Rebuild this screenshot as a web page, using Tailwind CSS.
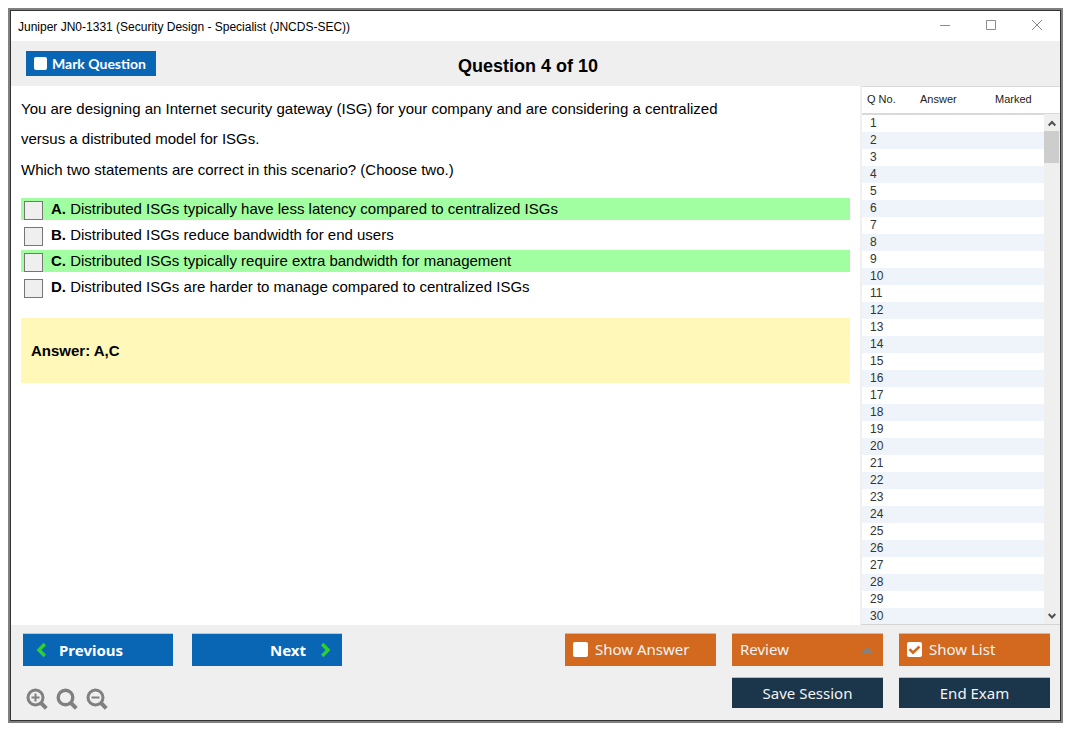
<!DOCTYPE html>
<html lang="en">
<head>
    <meta charset="UTF-8">
    <meta name="viewport" content="width=device-width, initial-scale=1.0">
    <title>Juniper JN0-1331 (Security Design - Specialist (JNCDS-SEC))</title>
    <script src="https://cdn.jsdelivr.net/npm/@tailwindcss/browser@4"></script>
</head>
<body class="h-screen bg-white pt-2 pl-2 pr-3 pb-3 font-['Liberation_Sans',Arial,sans-serif] text-black">
    <div class="h-full border-2 border-[#808080]">
        <div class="h-full flex flex-col border border-[#333333] bg-[#efefef]">

            <!-- Title bar -->
            <header class="flex items-center justify-between h-[30px] shrink-0 bg-white pl-[7px] pr-[17px]">
                <h1 class="pt-0.5 text-xs">Juniper JN0-1331 (Security Design - Specialist (JNCDS-SEC))</h1>
                <div class="flex items-center gap-[34px] pb-0.5 text-[#8c8c8c]">
                    <button type="button" aria-label="Minimize">
                        <svg class="block w-3 h-3" viewBox="0 0 12 12" fill="none" stroke="currentColor"><path d="M1 6.500h10"/></svg>
                    </button>
                    <button type="button" aria-label="Maximize">
                        <svg class="block w-3 h-3" viewBox="0 0 12 12" fill="none" stroke="currentColor"><path d="M1.500 1.500h9v9h-9z"/></svg>
                    </button>
                    <button type="button" aria-label="Close">
                        <svg class="block w-3 h-3" viewBox="0 0 12 12" fill="none" stroke="currentColor"><path d="M1 1l10 10M11 1L1 11"/></svg>
                    </button>
                </div>
            </header>

            <!-- Toolbar -->
            <div class="grid grid-cols-[1fr_auto_1fr] h-[45px] shrink-0 pl-[15px] pr-[30px] pt-2.5">
                <label class="flex items-center gap-[5px] w-[130px] h-[25px] pl-2 bg-[#0866b5] text-white text-sm font-bold font-['Lato',sans-serif]">
                    <input type="checkbox" class="appearance-none w-[13px] h-[13px] rounded-xs bg-white">
                    Mark Question
                </label>
                <h2 class="pt-px text-lg font-bold">Question 4 of 10</h2>
            </div>

            <main class="flex flex-1 min-h-0">
                <!-- Question -->
                <section class="flex-1 min-w-0 bg-white px-2.5 pt-2 text-[15px]">
                    <p class="leading-[30px] max-w-[720px]">You are designing an Internet security gateway (ISG) for your company and are considering a centralized versus a distributed model for ISGs.</p>
                    <p class="leading-[30px] mt-px">Which two statements are correct in this scenario? (Choose two.)</p>

                    <div class="mt-[13px] flex flex-col gap-1 leading-[22px]">
                        <label class="flex gap-2 h-[22px] pl-[3px] bg-[#a1ffa1]">
                            <input type="checkbox" class="appearance-none w-[19px] h-[19px] mt-[3px] border border-[#767676] bg-[#efefef]">
                            <span><b>A.</b> Distributed ISGs typically have less latency compared to centralized ISGs</span>
                        </label>
                        <label class="flex gap-2 h-[22px] pl-[3px]">
                            <input type="checkbox" class="appearance-none w-[19px] h-[19px] mt-[3px] border border-[#767676] bg-[#efefef]">
                            <span><b>B.</b> Distributed ISGs reduce bandwidth for end users</span>
                        </label>
                        <label class="flex gap-2 h-[22px] pl-[3px] bg-[#a1ffa1]">
                            <input type="checkbox" class="appearance-none w-[19px] h-[19px] mt-[3px] border border-[#767676] bg-[#efefef]">
                            <span><b>C.</b> Distributed ISGs typically require extra bandwidth for management</span>
                        </label>
                        <label class="flex gap-2 h-[22px] pl-[3px]">
                            <input type="checkbox" class="appearance-none w-[19px] h-[19px] mt-[3px] border border-[#767676] bg-[#efefef]">
                            <span><b>D.</b> Distributed ISGs are harder to manage compared to centralized ISGs</span>
                        </label>
                    </div>

                    <div class="mt-5 h-[65px] flex items-center pl-2.5 pt-0.5 bg-[#fff8b9] font-bold">Answer: A,C</div>
                </section>

                <!-- Question list -->
                <aside class="flex flex-col w-[200px] shrink-0 border-l-2 border-b border-l-[#f0f0f0] border-b-[#d5d5d5] bg-white">
                    <div class="flex-1 min-h-0 flex relative">
                        <div class="flex-1 overflow-hidden">
                            <table class="w-full table-fixed border-collapse text-xs text-[#333]">
                                <thead>
                                    <tr class="h-[27px] border-t border-b-2 border-[#d9d9d9] text-[11px] text-[#222]">
                                        <th class="w-[58px] pl-[5px] text-left font-normal">Q No.</th>
                                        <th class="w-[75px] text-left font-normal">Answer</th>
                                        <th class="text-left font-normal">Marked</th>
                                    </tr>
                                </thead>
                                <tbody id="questionRows"></tbody>
                            </table>
                        </div>
                        <!-- Scrollbar -->
                        <div class="absolute right-0 top-7 bottom-0 w-4 flex flex-col bg-[#efefef]">
                            <button type="button" aria-label="Scroll up" class="h-[17px] flex items-center justify-center text-[#505050]">
                                <svg class="w-2 h-2" viewBox="0 0 8 8" fill="none" stroke="currentColor" stroke-width="2"><path d="M.7 6.500L4 3l3.300 3.500"/></svg>
                            </button>
                            <div class="h-8 mr-px bg-[#cdcdcd]"></div>
                            <button type="button" aria-label="Scroll down" class="h-[17px] mt-auto flex items-center justify-center text-[#505050]">
                                <svg class="w-2 h-2" viewBox="0 0 8 8" fill="none" stroke="currentColor" stroke-width="2"><path d="M.7 2L4 5.500 7.300 2"/></svg>
                            </button>
                        </div>
                    </div>
                </aside>
            </main>

            <!-- Bottom bar -->
            <footer class="flex justify-between h-[95px] shrink-0 pl-3 pr-2.5 pt-2 font-['Noto_Sans',sans-serif]">
                <div>
                    <div class="flex gap-[19px] text-[15px] font-bold text-white">
                        <button type="button" class="flex items-center gap-3 w-[150px] h-[33px] pl-3 bg-[#0866b5] border-t border-[#a9cbe6]">
                            <svg class="w-3 h-4" viewBox="0 0 12 16" fill="none" stroke="#2fd02f" stroke-width="3.500"><path d="M9.800 2L4 8l5.800 6"/></svg>
                            Previous
                        </button>
                        <button type="button" class="flex items-center justify-end gap-3.5 w-[150px] h-[33px] pr-2.5 bg-[#0866b5] border-t border-[#a9cbe6]">
                            Next
                            <svg class="w-3 h-4" viewBox="0 0 12 16" fill="none" stroke="#2fd02f" stroke-width="3.500"><path d="M2.200 2L8 8l-5.800 6"/></svg>
                        </button>
                    </div>
                    <div class="flex gap-2 mt-[22px] pl-[3px] text-[#808080]">
                        <button type="button" aria-label="Zoom in">
                            <svg class="block w-[22px] h-[22px]" viewBox="0 0 22 22" fill="none" stroke="currentColor"><circle cx="9.500" cy="9.500" r="7.500" stroke-width="3"/><path d="M14.500 14.500l5.800 5.800" stroke-width="4"/><path d="M5.500 9.500h8M9.500 5.500v8" stroke-width="2"/></svg>
                        </button>
                        <button type="button" aria-label="Reset zoom">
                            <svg class="block w-[22px] h-[22px]" viewBox="0 0 22 22" fill="none" stroke="currentColor"><circle cx="9.500" cy="9.500" r="7.300" stroke-width="3.400"/><path d="M14.500 14.500l5.800 5.800" stroke-width="4"/></svg>
                        </button>
                        <button type="button" aria-label="Zoom out">
                            <svg class="block w-[22px] h-[22px]" viewBox="0 0 22 22" fill="none" stroke="currentColor"><circle cx="9.500" cy="9.500" r="7.500" stroke-width="3"/><path d="M14.500 14.500l5.800 5.800" stroke-width="4"/><path d="M5.500 9.500h8" stroke-width="2"/></svg>
                        </button>
                    </div>
                </div>

                <div class="grid grid-cols-[151px_151px_151px] grid-rows-[33px_31px] gap-x-4 gap-y-[11px] text-[15px] text-[#f4f4f4]">
                    <label class="flex items-center gap-[7px] pl-2 pb-0.5 bg-[#d2691e] border-t border-[#e8b08a]">
                        <input type="checkbox" class="appearance-none w-[15px] h-[15px] rounded-xs bg-white">
                        Show Answer
                    </label>
                    <div class="relative">
                        <select aria-label="Review" class="appearance-none w-full h-full pl-2 pb-0.5 bg-[#d2691e] border-t border-[#e8b08a]">
                            <option>Review</option>
                        </select>
                        <svg class="absolute right-2.5 top-3.5 w-3 h-1.5 pointer-events-none" viewBox="0 0 12 6" fill="#85827e"><path d="M0 6l6-6 6 6z"/></svg>
                    </div>
                    <label class="flex items-center gap-[7px] pl-2 pb-0.5 bg-[#d2691e] border-t border-[#e8b08a]">
                        <span class="relative">
                            <input type="checkbox" checked class="block appearance-none w-[15px] h-[15px] rounded-xs bg-white">
                            <svg class="absolute inset-0 w-[15px] h-[15px] pointer-events-none" viewBox="0 0 15 15" fill="none" stroke="#d2691e" stroke-width="2.600"><path d="M2.500 7.200l3.500 3.500L12.500 4.500"/></svg>
                        </span>
                        Show List
                    </label>
                    <button type="button" class="col-start-2 bg-[#1b354a] border-t border-[#b4bcc2]">Save Session</button>
                    <button type="button" class="bg-[#1b354a] border-t border-[#b4bcc2]">End Exam</button>
                </div>
            </footer>
        </div>
    </div>

    <script>
        const questionRows = document.getElementById("questionRows");
        for (let i = 1; i <= 30; i++) {
            const row = document.createElement("tr");
            row.className = "h-[17px] leading-[17px] even:bg-[#eef4f9]";
            row.innerHTML = `<td class="pl-2">${i}</td><td></td><td></td>`;
            questionRows.appendChild(row);
        }
    </script>
</body>
</html>
